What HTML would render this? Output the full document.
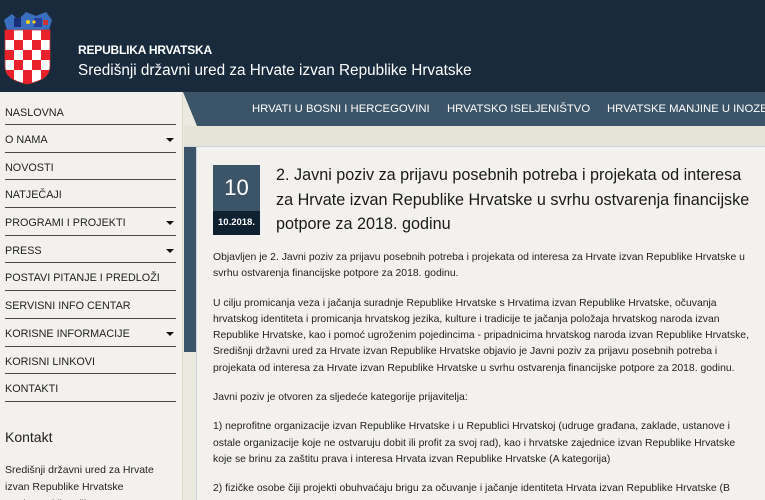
<!DOCTYPE html>
<html><head><meta charset="utf-8"><style>
*{margin:0;padding:0;box-sizing:border-box}
html,body{width:765px;height:500px;overflow:hidden}
body{background:#ece9e1;font-family:"Liberation Sans","DejaVu Sans",sans-serif;position:relative}
.hdr{position:absolute;left:0;top:0;width:765px;height:92px;background:#182a3b}
.t1{position:absolute;left:78px;top:43px;color:#fff;font-size:12px;font-weight:bold;letter-spacing:-0.2px}
.t2{position:absolute;left:78px;top:62px;color:#fff;font-size:15.3px}
.side{position:absolute;left:0;top:92px;width:183px;height:408px;background:#f3f1ed;border-right:1px solid #ddd9ce}
.side ul{list-style:none;padding:0 6px 0 5px}
.side li{height:27.7px;border-bottom:1px solid #4a4a4a;font-size:10.8px;color:#222;padding-top:9px;position:relative}
.side li.a:after{content:"";position:absolute;right:2px;top:13px;border:4px solid transparent;border-top:4px solid #111;border-bottom:0}
.side li:first-child{height:33px;padding-top:15px}
.kt{position:absolute;left:5px;top:337px;font-size:14px;color:#222}
.kx{position:absolute;left:5px;top:370px;font-size:10.5px;color:#222;line-height:17px}
.strip{position:absolute;left:184px;top:147px;width:12px;height:205px;background:#3c5467}
.nav{position:absolute;left:183px;top:92px;width:582px;height:34px}
.nav span{position:absolute;top:11px;color:#fff;font-size:11.3px}
.band{position:absolute;left:184px;top:126px;width:581px;height:21px;background:#e6e3d8;border-bottom:1px solid #cfd6da}
.main{position:absolute;left:196px;top:147px;width:569px;height:353px;background:#f3f1ed;border-left:1px solid #c9d2d8}
.date{position:absolute;left:213px;top:165px;width:47px;height:48px;background:#3c5467;color:#fff;font-size:22px;text-align:center;padding-top:10px}
.date2{position:absolute;left:213px;top:211px;width:47px;height:24px;background:#0f2030;color:#fff;font-size:9.5px;font-weight:bold;text-align:center;padding-top:6px}
.title{position:absolute;left:276px;top:163px;width:480px;font-size:16.2px;line-height:24.5px;color:#1a1a1a}
.body{position:absolute;left:213px;top:250px;width:540px;font-size:10.4px;line-height:16.3px;color:#222}
.body p{margin-bottom:13px}
</style></head><body>
<div class="hdr">
<svg width="60" height="90" style="position:absolute;left:0;top:0">
<polygon points="4,20 12,14 18,20 26,12 36,16 46,12 52,20 49,30 7,30" fill="#3a6fc0"/>
<rect x="14" y="18" width="7" height="9" fill="#1a2f7a"/><rect x="34" y="18" width="8" height="9" fill="#2a3f9a"/>
<circle cx="28" cy="22" r="2" fill="#f4d020"/><circle cx="34" cy="22" r="1.6" fill="#f4d020"/><rect x="43" y="20" width="5" height="5" fill="#c33"/>
<path d="M5 30 H50 V66 Q50 80 27 84 Q5 80 5 66 Z" fill="#fff" stroke="#b33" stroke-width="0.8"/>
<clipPath id="c"><path d="M5 30 H50 V66 Q50 80 27 84 Q5 80 5 66 Z"/></clipPath>
<g clip-path="url(#c)" fill="#e8212b">
<rect x="5" y="30" width="9" height="10"/><rect x="23" y="30" width="9" height="10"/><rect x="41" y="30" width="9" height="10"/>
<rect x="14" y="40" width="9" height="10"/><rect x="32" y="40" width="9" height="10"/>
<rect x="5" y="50" width="9" height="10"/><rect x="23" y="50" width="9" height="10"/><rect x="41" y="50" width="9" height="10"/>
<rect x="14" y="60" width="9" height="10"/><rect x="32" y="60" width="9" height="10"/>
<rect x="5" y="70" width="9" height="14"/><rect x="23" y="70" width="9" height="14"/><rect x="41" y="70" width="9" height="14"/>
</g></svg>
<div class="t1">REPUBLIKA HRVATSKA</div>
<div class="t2">Središnji državni ured za Hrvate izvan Republike Hrvatske</div>
</div>
<div class="band"></div>
<svg class="nav" width="582" height="34"><polygon points="0,0 582,0 582,34 14,34" fill="#3c5467"/></svg>
<div class="nav" style="background:none;overflow:hidden"><span style="left:69px">HRVATI U BOSNI I HERCEGOVINI</span><span style="left:264px">HRVATSKO ISELJENIŠTVO</span><span style="left:424px;white-space:nowrap">HRVATSKE MANJINE U INOZEMSTVU</span></div>
<div class="side"><ul>
<li>NASLOVNA</li><li class="a">O NAMA</li><li>NOVOSTI</li><li>NATJEČAJI</li><li class="a">PROGRAMI I PROJEKTI</li><li class="a">PRESS</li><li>POSTAVI PITANJE I PREDLOŽI</li><li>SERVISNI INFO CENTAR</li><li class="a">KORISNE INFORMACIJE</li><li>KORISNI LINKOVI</li><li>KONTAKTI</li></ul>
<div class="kt">Kontakt</div>
<div class="kx">Središnji državni ured za Hrvate<br>izvan Republike Hrvatske<br>Trg hrvatskih velikana 6</div>
</div>
<div class="strip"></div>
<div class="main"></div>
<div class="date">10</div><div class="date2">10.2018.</div>
<div class="title">2. Javni poziv za prijavu posebnih potreba i projekata od interesa za Hrvate izvan Republike Hrvatske u svrhu ostvarenja financijske potpore za 2018. godinu</div>
<div class="body">
<p>Objavljen je 2. Javni poziv za prijavu posebnih potreba i projekata od interesa za Hrvate izvan Republike Hrvatske u svrhu ostvarenja financijske potpore za 2018. godinu.</p>
<p>U cilju promicanja veza i jačanja suradnje Republike Hrvatske s Hrvatima izvan Republike Hrvatske, očuvanja hrvatskog identiteta i promicanja hrvatskog jezika, kulture i tradicije te jačanja položaja hrvatskog naroda izvan Republike Hrvatske, kao i pomoć ugroženim pojedincima - pripadnicima hrvatskog naroda izvan Republike Hrvatske, Središnji državni ured za Hrvate izvan Republike Hrvatske objavio je Javni poziv za prijavu posebnih potreba i projekata od interesa za Hrvate izvan Republike Hrvatske u svrhu ostvarenja financijske potpore za 2018. godinu.</p>
<p>Javni poziv je otvoren za sljedeće kategorije prijavitelja:</p>
<p>1) neprofitne organizacije izvan Republike Hrvatske i u Republici Hrvatskoj (udruge građana, zaklade, ustanove i ostale organizacije koje ne ostvaruju dobit ili profit za svoj rad), kao i hrvatske zajednice izvan Republike Hrvatske koje se brinu za zaštitu prava i interesa Hrvata izvan Republike Hrvatske (A kategorija)</p>
<p>2) fizičke osobe čiji projekti obuhvaćaju brigu za očuvanje i jačanje identiteta Hrvata izvan Republike Hrvatske (B kategorija)</p>
</div>
</body></html>
